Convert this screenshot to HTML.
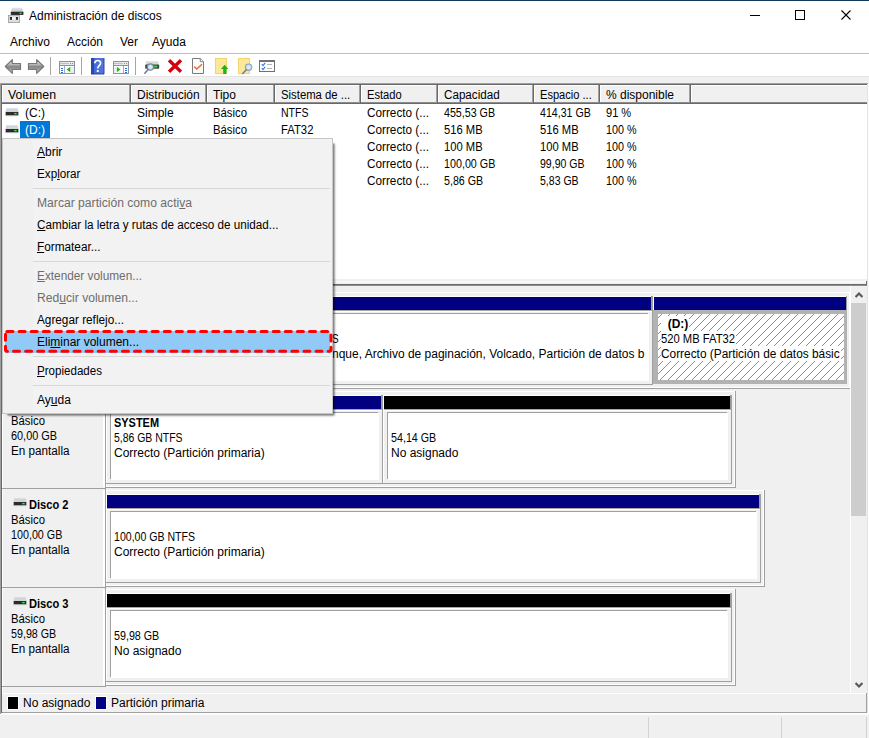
<!DOCTYPE html>
<html><head><meta charset="utf-8"><title>Administración de discos</title>
<style>
html,body{margin:0;padding:0}
body{width:869px;height:738px;overflow:hidden;position:relative;background:#f0f0f0;font-family:"Liberation Sans",sans-serif;font-size:12px;color:#000}
body>div,body>span,body>svg{position:absolute;display:block}
.t{white-space:nowrap;line-height:14px;height:14px}
u{text-decoration:underline;text-underline-offset:1px}
b{font-weight:bold}
</style></head>
<body>
<div style="left:0px;top:0px;width:869px;height:31px;background:#fff;"></div>
<div style="left:0px;top:0px;width:869px;height:1px;background:#113b5d;"></div>
<svg style="left:8px;top:7px" width="16" height="16" viewBox="0 0 16 16">
<defs><linearGradient id="gi" x1="0" y1="0" x2="0" y2="1"><stop offset="0" stop-color="#e2e4e7"/><stop offset="1" stop-color="#c3c7cc"/></linearGradient></defs>
<path d="M3.9 0.8 L14 0.8 L15.3 5 L2.8 5 Z" fill="url(#gi)"/>
<rect x="2.8" y="4.8" width="12.6" height="3.1" rx="0.5" fill="#2b2b2b"/>
<rect x="11.6" y="5.6" width="2" height="1.5" fill="#38e838"/>
<rect x="0.4" y="8.3" width="11.2" height="7.3" fill="#dcdee1" stroke="#9b9b9b" stroke-width="0.8"/>
<rect x="4" y="10.2" width="4" height="2.4" fill="#f6f6f6"/>
<rect x="1.9" y="10" width="2.1" height="2.8" fill="#2a2a2a"/>
<rect x="7.9" y="10" width="2.1" height="2.8" fill="#2a2a2a"/>
</svg>
<span class="t " style="left:29px;top:9px;">Administración de discos</span>
<svg style="left:740px;top:1px" width="129" height="29" viewBox="0 0 129 29" shape-rendering="crispEdges">
<rect x="10" y="14" width="10" height="1" fill="#000"/>
<rect x="55.5" y="9.5" width="9" height="9" fill="none" stroke="#000" stroke-width="1"/>
<path d="M101.5 9.5 L110.5 18.5 M110.5 9.5 L101.5 18.5" stroke="#000" stroke-width="1.1" fill="none" shape-rendering="auto"/>
</svg>
<div style="left:0px;top:31px;width:869px;height:22px;background:#fff;"></div>
<span class="t " style="left:10px;top:35px;">Archivo</span>
<span class="t " style="left:67px;top:35px;">Acción</span>
<span class="t " style="left:120px;top:35px;">Ver</span>
<span class="t " style="left:152px;top:35px;">Ayuda</span>
<div style="left:0px;top:53px;width:869px;height:1px;background:#bdbdbd;"></div>
<div style="left:0px;top:54px;width:869px;height:22px;background:#fff;"></div>
<div style="left:0px;top:76px;width:869px;height:1px;background:#e4e4e4;"></div>
<div style="left:50px;top:57px;width:1px;height:18px;background:#a6a6a6;"></div>
<div style="left:81px;top:57px;width:1px;height:18px;background:#a6a6a6;"></div>
<div style="left:135px;top:57px;width:1px;height:18px;background:#a6a6a6;"></div>
<svg style="left:0;top:54px" width="290" height="22" viewBox="0 0 290 22">
<defs>
<linearGradient id="ga" x1="0" y1="0" x2="0" y2="1"><stop offset="0" stop-color="#d6d6d6"/><stop offset="0.32" stop-color="#c2c2c2"/><stop offset="0.5" stop-color="#8a8a8a"/><stop offset="0.62" stop-color="#8f8f8f"/><stop offset="0.8" stop-color="#b4b4b4"/><stop offset="1" stop-color="#cccccc"/></linearGradient>
<linearGradient id="gh" x1="0" y1="0" x2="1" y2="0"><stop offset="0" stop-color="#2848b4"/><stop offset="0.2" stop-color="#2848b4"/><stop offset="0.22" stop-color="#4469d6"/><stop offset="1" stop-color="#5478de"/></linearGradient>
<radialGradient id="gl"><stop offset="0" stop-color="#e8f3fb"/><stop offset="1" stop-color="#b7d3ea"/></radialGradient>
</defs>
<!-- back / forward arrows -->
<path d="M5.3 12.5 L12.3 5.6 L12.3 9.5 L20.5 9.5 L20.5 15.5 L12.3 15.5 L12.3 19.4 Z" fill="url(#ga)" stroke="#787878" stroke-width="1.2" stroke-linejoin="round"/>
<path d="M43.7 12.5 L36.7 5.6 L36.7 9.5 L28.5 9.5 L28.5 15.5 L36.7 15.5 L36.7 19.4 Z" fill="url(#ga)" stroke="#787878" stroke-width="1.2" stroke-linejoin="round"/>
<!-- show/hide console tree -->
<g shape-rendering="crispEdges">
<rect x="59.5" y="7.5" width="15" height="12" fill="#fff" stroke="#8a92a6"/>
<rect x="60" y="8" width="14" height="3" fill="#e6e8ec"/>
<rect x="60" y="9" width="9" height="1" fill="#b9bfcc"/>
<rect x="70" y="9" width="1" height="1" fill="#8a92a6"/><rect x="72" y="9" width="1" height="1" fill="#8a92a6"/>
<rect x="60" y="11" width="14" height="1" fill="#8a92a6"/>
<rect x="64" y="12" width="1" height="7" fill="#a6adbd"/>
<rect x="61" y="14" width="2" height="1" fill="#2d6bd8"/><rect x="61" y="16" width="2" height="1" fill="#2d6bd8"/><rect x="61" y="18" width="2" height="1" fill="#2d6bd8"/>
<rect x="71" y="13" width="3" height="6" fill="#eeeeee"/>
</g>
<path d="M70.3 12.8 L70.3 18.2 L66.6 15.5 Z" fill="#25b425"/>
<!-- help -->
<rect x="91" y="4" width="13" height="16" fill="url(#gh)"/>
<path d="M91 20 L104 20 L104 4" fill="none" stroke="#1f3793" stroke-width="0.9"/>
<path d="M94.8 9.2 C94.8 5.6 100.6 5.6 100.6 9.1 C100.6 11.6 97.7 11.6 97.7 14.4" fill="none" stroke="#fff" stroke-width="1.7"/>
<rect x="96.8" y="16" width="1.9" height="2" fill="#fff"/>
<!-- action pane -->
<g shape-rendering="crispEdges">
<rect x="113.5" y="7.5" width="15" height="12" fill="#fff" stroke="#8a92a6"/>
<rect x="114" y="8" width="14" height="3" fill="#e6e8ec"/>
<rect x="114" y="9" width="9" height="1" fill="#b9bfcc"/>
<rect x="124" y="9" width="1" height="1" fill="#8a92a6"/><rect x="126" y="9" width="1" height="1" fill="#8a92a6"/>
<rect x="114" y="11" width="14" height="1" fill="#8a92a6"/>
<rect x="123" y="12" width="1" height="7" fill="#a6adbd"/>
<rect x="125" y="14" width="2" height="1" fill="#2d6bd8"/><rect x="125" y="16" width="2" height="1" fill="#2d6bd8"/><rect x="125" y="18" width="2" height="1" fill="#2d6bd8"/>
<rect x="114" y="13" width="2" height="6" fill="#eeeeee"/>
</g>
<path d="M116.8 12.8 L116.8 18.2 L120.5 15.5 Z" fill="#25b425"/>
<!-- drive + magnifier -->
<rect x="146" y="7.3" width="12.5" height="3.6" fill="#d6dade"/>
<rect x="145.2" y="10.4" width="14" height="4.4" rx="0.7" fill="#444"/>
<rect x="154.2" y="11.7" width="3" height="1.8" fill="#2fe62f"/>
<circle cx="150.4" cy="13" r="3.1" fill="url(#gl)" stroke="#73869a" stroke-width="1.1"/>
<path d="M148.1 15.6 L144.8 19.3" stroke="#6b7c8f" stroke-width="1.5" stroke-linecap="round"/>
<!-- red X -->
<path d="M169 6.2 L181 17.8 M181 6.2 L169 17.8" stroke="#d6000c" stroke-width="3.3" stroke-linecap="butt"/>
<!-- document with check -->
<path d="M192.5 4.5 L200.3 4.5 L203.5 7.7 L203.5 19.5 L192.5 19.5 Z" fill="#fbfbfb" stroke="#7b7b7b"/>
<path d="M200.3 4.5 L200.3 7.7 L203.5 7.7" fill="#fff" stroke="#7b7b7b" stroke-width="0.9"/>
<path d="M194.2 12.6 L196.8 15 L202 10.2" fill="none" stroke="#ee6a2c" stroke-width="1.5"/>
<!-- folder up -->
<rect x="215.4" y="4.4" width="11" height="15.2" fill="#fde798" stroke="#f1cf62" stroke-width="0.9"/>
<path d="M224.7 10.8 L228.4 14.9 L226.4 14.9 L226.4 20 L223.2 20 L223.2 14.9 L221 14.9 Z" fill="#19b619"/>
<!-- folder search -->
<rect x="238.4" y="4.4" width="11" height="15.2" fill="#fde798" stroke="#f1cf62" stroke-width="0.9"/>
<circle cx="248.6" cy="13.2" r="3.2" fill="url(#gl)" stroke="#8ea4ba" stroke-width="1.1"/>
<path d="M246.3 15.8 L242.7 19.5" stroke="#6d7f93" stroke-width="1.5" stroke-linecap="round"/>
<!-- checklist -->
<g shape-rendering="crispEdges">
<rect x="259.5" y="6.5" width="15" height="11" fill="#fff" stroke="#6f7174"/>
<rect x="260" y="7" width="14" height="1" fill="#6f7174"/>
<rect x="267" y="10" width="5" height="1" fill="#b5b5b5"/><rect x="267" y="14" width="5" height="1" fill="#b5b5b5"/>
</g>
<path d="M261.8 10.2 L263 11.6 L265.2 8.9" fill="none" stroke="#2b7be4" stroke-width="1.1"/>
<path d="M261.8 14.2 L263 15.6 L265.2 12.9" fill="none" stroke="#2b7be4" stroke-width="1.1"/>
</svg>
<div style="left:1px;top:83px;width:866px;height:196px;background:#fff;"></div>
<div style="left:0px;top:83px;width:868px;height:1px;background:#a0a0a0;"></div>
<div style="left:867px;top:84px;width:1px;height:202px;background:#e3e3e3;"></div>
<div style="left:868px;top:83px;width:1px;height:203px;background:#fff;"></div>
<div style="left:2px;top:84px;width:865px;height:20px;background:#f0f0f0;"></div>
<div style="left:2px;top:102px;width:865px;height:1px;background:#8c8c8c;"></div>
<div style="left:2px;top:103px;width:865px;height:1px;background:#696969;"></div>
<div style="left:1px;top:84px;width:866px;height:1px;background:#696969;"></div>
<div style="left:2px;top:85px;width:865px;height:1px;background:#fff;"></div>
<div style="left:2px;top:85px;width:1px;height:17px;background:#fff;"></div>
<div style="left:129px;top:85px;width:1px;height:18px;background:#a0a0a0;"></div>
<div style="left:130px;top:85px;width:1px;height:19px;background:#696969;"></div>
<span class="t " style="left:8px;top:88px;transform:scaleX(1.0278);transform-origin:0 0;">Volumen</span>
<div style="left:131px;top:85px;width:1px;height:17px;background:#fff;"></div>
<div style="left:205px;top:85px;width:1px;height:18px;background:#a0a0a0;"></div>
<div style="left:206px;top:85px;width:1px;height:19px;background:#696969;"></div>
<span class="t " style="left:137px;top:88px;">Distribución</span>
<div style="left:207px;top:85px;width:1px;height:17px;background:#fff;"></div>
<div style="left:273px;top:85px;width:1px;height:18px;background:#a0a0a0;"></div>
<div style="left:274px;top:85px;width:1px;height:19px;background:#696969;"></div>
<span class="t " style="left:213px;top:88px;">Tipo</span>
<div style="left:275px;top:85px;width:1px;height:17px;background:#fff;"></div>
<div style="left:359px;top:85px;width:1px;height:18px;background:#a0a0a0;"></div>
<div style="left:360px;top:85px;width:1px;height:19px;background:#696969;"></div>
<span class="t " style="left:281px;top:88px;transform:scaleX(0.9437);transform-origin:0 0;">Sistema de ...</span>
<div style="left:361px;top:85px;width:1px;height:17px;background:#fff;"></div>
<div style="left:436px;top:85px;width:1px;height:18px;background:#a0a0a0;"></div>
<div style="left:437px;top:85px;width:1px;height:19px;background:#696969;"></div>
<span class="t " style="left:367px;top:88px;transform:scaleX(0.9292);transform-origin:0 0;">Estado</span>
<div style="left:438px;top:85px;width:1px;height:17px;background:#fff;"></div>
<div style="left:532px;top:85px;width:1px;height:18px;background:#a0a0a0;"></div>
<div style="left:533px;top:85px;width:1px;height:19px;background:#696969;"></div>
<span class="t " style="left:444px;top:88px;transform:scaleX(0.9708);transform-origin:0 0;">Capacidad</span>
<div style="left:534px;top:85px;width:1px;height:17px;background:#fff;"></div>
<div style="left:598px;top:85px;width:1px;height:18px;background:#a0a0a0;"></div>
<div style="left:599px;top:85px;width:1px;height:19px;background:#696969;"></div>
<span class="t " style="left:540px;top:88px;transform:scaleX(0.9232);transform-origin:0 0;">Espacio ...</span>
<div style="left:600px;top:85px;width:1px;height:17px;background:#fff;"></div>
<div style="left:689px;top:85px;width:1px;height:18px;background:#a0a0a0;"></div>
<div style="left:690px;top:85px;width:1px;height:19px;background:#696969;"></div>
<span class="t " style="left:606px;top:88px;">% disponible</span>
<div style="left:691px;top:85px;width:1px;height:17px;background:#fff;"></div>
<span class="t " style="left:25px;top:106px;">(C:)</span>
<span class="t " style="left:137px;top:106px;">Simple</span>
<span class="t " style="left:213px;top:106px;transform:scaleX(0.9440);transform-origin:0 0;">Básico</span>
<span class="t " style="left:281px;top:106px;transform:scaleX(0.8778);transform-origin:0 0;">NTFS</span>
<span class="t " style="left:367px;top:106px;transform:scaleX(0.9790);transform-origin:0 0;">Correcto (...</span>
<span class="t " style="left:444px;top:106px;transform:scaleX(0.8894);transform-origin:0 0;">455,53 GB</span>
<span class="t " style="left:540px;top:106px;transform:scaleX(0.8841);transform-origin:0 0;">414,31 GB</span>
<span class="t " style="left:606px;top:106px;transform:scaleX(0.9216);transform-origin:0 0;">91 %</span>
<svg style="left:5px;top:108px" width="14" height="9" viewBox="0 0 14 9"><path d="M1.3 0.2 L12.7 0.2 L13.7 4.2 L0.3 4.2 Z" fill="#d2d6db"/><rect x="0.2" y="3.7" width="13.6" height="4.5" rx="0.7" fill="#c9cdd3"/><rect x="0.8" y="4" width="12.4" height="3.2" fill="#2c2c2c"/><rect x="9.2" y="4.9" width="2.5" height="1.4" fill="#36ea36"/></svg>
<div style="left:20px;top:121px;width:30px;height:17px;background:#0078d7;"></div>
<span class="t " style="left:25px;top:123px;color:#fff;">(D:)</span>
<span class="t " style="left:137px;top:123px;">Simple</span>
<span class="t " style="left:213px;top:123px;transform:scaleX(0.9440);transform-origin:0 0;">Básico</span>
<span class="t " style="left:281px;top:123px;transform:scaleX(0.9404);transform-origin:0 0;">FAT32</span>
<span class="t " style="left:367px;top:123px;transform:scaleX(0.9790);transform-origin:0 0;">Correcto (...</span>
<span class="t " style="left:444px;top:123px;transform:scaleX(0.9336);transform-origin:0 0;">516 MB</span>
<span class="t " style="left:540px;top:123px;transform:scaleX(0.9336);transform-origin:0 0;">516 MB</span>
<span class="t " style="left:606px;top:123px;transform:scaleX(0.8966);transform-origin:0 0;">100 %</span>
<svg style="left:5px;top:125px" width="14" height="9" viewBox="0 0 14 9"><path d="M1.3 0.2 L12.7 0.2 L13.7 4.2 L0.3 4.2 Z" fill="#d2d6db"/><rect x="0.2" y="3.7" width="13.6" height="4.5" rx="0.7" fill="#c9cdd3"/><rect x="0.8" y="4" width="12.4" height="3.2" fill="#2c2c2c"/><rect x="9.2" y="4.9" width="2.5" height="1.4" fill="#36ea36"/></svg>
<span class="t " style="left:367px;top:140px;transform:scaleX(0.9790);transform-origin:0 0;">Correcto (...</span>
<span class="t " style="left:444px;top:140px;transform:scaleX(0.9336);transform-origin:0 0;">100 MB</span>
<span class="t " style="left:540px;top:140px;transform:scaleX(0.9336);transform-origin:0 0;">100 MB</span>
<span class="t " style="left:606px;top:140px;transform:scaleX(0.8966);transform-origin:0 0;">100 %</span>
<span class="t " style="left:367px;top:157px;transform:scaleX(0.9790);transform-origin:0 0;">Correcto (...</span>
<span class="t " style="left:444px;top:157px;transform:scaleX(0.8946);transform-origin:0 0;">100,00 GB</span>
<span class="t " style="left:540px;top:157px;transform:scaleX(0.8782);transform-origin:0 0;">99,90 GB</span>
<span class="t " style="left:606px;top:157px;transform:scaleX(0.8966);transform-origin:0 0;">100 %</span>
<span class="t " style="left:367px;top:174px;transform:scaleX(0.9790);transform-origin:0 0;">Correcto (...</span>
<span class="t " style="left:444px;top:174px;transform:scaleX(0.8909);transform-origin:0 0;">5,86 GB</span>
<span class="t " style="left:540px;top:174px;transform:scaleX(0.8773);transform-origin:0 0;">5,83 GB</span>
<span class="t " style="left:606px;top:174px;transform:scaleX(0.8966);transform-origin:0 0;">100 %</span>
<div style="left:2px;top:279px;width:865px;height:2px;background:#f0f0f0;"></div>
<div style="left:2px;top:281px;width:865px;height:1px;background:#fbfbfb;"></div>
<div style="left:2px;top:282px;width:865px;height:2px;background:#f3f3f3;"></div>
<div style="left:1px;top:284px;width:866px;height:1px;background:#6a6a6a;"></div>
<div style="left:866px;top:281px;width:1px;height:4px;background:#6a6a6a;"></div>
<div style="left:1px;top:285px;width:866px;height:1px;background:#8c8c8c;"></div>
<div style="left:2px;top:286px;width:1px;height:407px;background:#fff;"></div>
<div style="left:2px;top:290px;width:104px;height:1px;background:#a0a0a0;"></div>
<div style="left:105px;top:291px;width:1px;height:98px;background:#a0a0a0;"></div>
<div style="left:103px;top:292px;width:1px;height:96px;background:#fff;"></div>
<div style="left:104px;top:292px;width:1px;height:96px;background:#fff;"></div>
<div style="left:106px;top:292px;width:1px;height:96px;background:#fff;"></div>
<svg style="left:13px;top:300px" width="14" height="9" viewBox="0 0 14 9"><path d="M1.3 0.2 L12.7 0.2 L13.7 4.2 L0.3 4.2 Z" fill="#d2d6db"/><rect x="0.2" y="3.7" width="13.6" height="4.5" rx="0.7" fill="#c9cdd3"/><rect x="0.8" y="4" width="12.4" height="3.2" fill="#2c2c2c"/><rect x="9.2" y="4.9" width="2.5" height="1.4" fill="#36ea36"/></svg>
<span class="t " style="left:29px;top:300px;transform:scaleX(0.9257);transform-origin:0 0;"><b>Disco 0</b></span>
<span class="t " style="left:11px;top:315px;transform:scaleX(0.9440);transform-origin:0 0;">Básico</span>
<span class="t " style="left:11px;top:330px;"></span>
<span class="t " style="left:11px;top:345px;transform:scaleX(0.9745);transform-origin:0 0;">En pantalla</span>
<div style="left:106px;top:292px;width:744px;height:1px;background:#fff;"></div>
<div style="left:850px;top:292px;width:1px;height:97px;background:#a0a0a0;"></div>
<div style="left:105px;top:388px;width:746px;height:1px;background:#a0a0a0;"></div>
<div style="left:106px;top:387px;width:744px;height:1px;background:#fff;"></div>
<div style="left:849px;top:293px;width:1px;height:95px;background:#fff;"></div>
<div style="left:106px;top:384px;width:547px;height:1px;background:#a0a0a0;"></div>
<div style="left:107px;top:296px;width:544px;height:1px;background:#fff;"></div>
<div style="left:107px;top:297px;width:544px;height:13px;background:#000080;"></div>
<div style="left:651px;top:296px;width:1px;height:15px;background:#9c9c9c;"></div>
<div style="left:107px;top:310px;width:545px;height:1px;background:#aaa89e;"></div>
<div style="left:107px;top:311px;width:545px;height:1px;background:#fff;"></div>
<div style="left:652px;top:296px;width:1px;height:89px;background:#a0a0a0;"></div>
<div style="left:653px;top:296px;width:1px;height:88px;background:#fff;"></div>
<div style="left:111px;top:314px;width:538px;height:67px;background:#fff;"></div>
<div style="left:110px;top:313px;width:538px;height:1px;background:#a0a0a0;"></div>
<div style="left:110px;top:313px;width:1px;height:67px;background:#a0a0a0;"></div>
<span class="t" style="left:114px;top:317px;width:534px;overflow:hidden;"><b>(C:)</b></span>
<span class="t" style="left:332px;top:332px;width:316px;overflow:hidden;transform:scaleX(0.8250);transform-origin:0 0;">S</span>
<span class="t" style="left:332.3px;top:347px;width:315.7px;overflow:hidden;transform:scaleX(0.9984);transform-origin:0 0;">nque, Archivo de paginación, Volcado, Partición de datos b</span>
<div style="left:654px;top:296px;width:192px;height:1px;background:#fff;"></div>
<div style="left:654px;top:297px;width:192px;height:13px;background:#000080;"></div>
<div style="left:846px;top:296px;width:1px;height:15px;background:#9c9c9c;"></div>
<div style="left:654px;top:310px;width:193px;height:1px;background:#aaa89e;"></div>
<div style="left:654px;top:311px;width:193px;height:1px;background:#fff;"></div>
<div style="left:653px;top:310px;width:194px;height:74px;background:#b2b2b2;"></div>
<svg style="left:658px;top:314px" width="186" height="66"><defs><pattern id="hp" width="8" height="8" patternUnits="userSpaceOnUse" patternTransform="translate(4,0)"><rect width="8" height="8" fill="#fff"/><path d="M-1 9 L9 -1 M-1 1 L1 -1 M7 9 L9 7" stroke="#8c8c8c" stroke-width="1"/></pattern></defs><rect width="100%" height="100%" fill="url(#hp)"/></svg>
<div style="left:661px;top:316px;width:28px;height:15px;background:#fff;"></div>
<span class="t" style="left:661px;top:317px;width:182px;overflow:hidden;"><b>&nbsp;&nbsp;(D:)</b></span>
<div style="left:661px;top:331px;width:75px;height:15px;background:#fff;"></div>
<span class="t" style="left:661px;top:332px;width:182px;overflow:hidden;transform:scaleX(0.9352);transform-origin:0 0;">520 MB FAT32</span>
<div style="left:661px;top:346px;width:180px;height:15px;background:#fff;"></div>
<span class="t" style="left:661px;top:347px;width:182px;overflow:hidden;transform:scaleX(0.9883);transform-origin:0 0;">Correcto (Partición de datos básic</span>
<div style="left:2px;top:389px;width:104px;height:1px;background:#a0a0a0;"></div>
<div style="left:105px;top:390px;width:1px;height:98px;background:#a0a0a0;"></div>
<div style="left:103px;top:391px;width:1px;height:96px;background:#fff;"></div>
<div style="left:104px;top:391px;width:1px;height:96px;background:#fff;"></div>
<div style="left:106px;top:391px;width:1px;height:96px;background:#fff;"></div>
<svg style="left:13px;top:399px" width="14" height="9" viewBox="0 0 14 9"><path d="M1.3 0.2 L12.7 0.2 L13.7 4.2 L0.3 4.2 Z" fill="#d2d6db"/><rect x="0.2" y="3.7" width="13.6" height="4.5" rx="0.7" fill="#c9cdd3"/><rect x="0.8" y="4" width="12.4" height="3.2" fill="#2c2c2c"/><rect x="9.2" y="4.9" width="2.5" height="1.4" fill="#36ea36"/></svg>
<span class="t " style="left:29px;top:399px;transform:scaleX(0.9257);transform-origin:0 0;"><b>Disco 1</b></span>
<span class="t " style="left:11px;top:414px;transform:scaleX(0.9440);transform-origin:0 0;">Básico</span>
<span class="t " style="left:11px;top:429px;transform:scaleX(0.9078);transform-origin:0 0;">60,00 GB</span>
<span class="t " style="left:11px;top:444px;transform:scaleX(0.9745);transform-origin:0 0;">En pantalla</span>
<div style="left:106px;top:391px;width:629px;height:1px;background:#fff;"></div>
<div style="left:735px;top:391px;width:1px;height:97px;background:#a0a0a0;"></div>
<div style="left:105px;top:487px;width:631px;height:1px;background:#a0a0a0;"></div>
<div style="left:106px;top:486px;width:629px;height:1px;background:#fff;"></div>
<div style="left:734px;top:392px;width:1px;height:95px;background:#fff;"></div>
<div style="left:106px;top:483px;width:626px;height:1px;background:#a0a0a0;"></div>
<div style="left:107px;top:395px;width:274px;height:1px;background:#fff;"></div>
<div style="left:107px;top:396px;width:274px;height:13px;background:#000080;"></div>
<div style="left:381px;top:395px;width:1px;height:15px;background:#9c9c9c;"></div>
<div style="left:107px;top:409px;width:275px;height:1px;background:#aaa89e;"></div>
<div style="left:107px;top:410px;width:275px;height:1px;background:#fff;"></div>
<div style="left:382px;top:395px;width:1px;height:89px;background:#a0a0a0;"></div>
<div style="left:383px;top:395px;width:1px;height:88px;background:#fff;"></div>
<div style="left:111px;top:413px;width:268px;height:67px;background:#fff;"></div>
<div style="left:110px;top:412px;width:268px;height:1px;background:#a0a0a0;"></div>
<div style="left:110px;top:412px;width:1px;height:67px;background:#a0a0a0;"></div>
<span class="t" style="left:114px;top:416px;width:264px;overflow:hidden;transform:scaleX(0.9123);transform-origin:0 0;"><b>SYSTEM</b></span>
<span class="t" style="left:114px;top:431px;width:264px;overflow:hidden;transform:scaleX(0.8709);transform-origin:0 0;">5,86 GB NTFS</span>
<span class="t" style="left:114px;top:446px;width:264px;overflow:hidden;">Correcto (Partición primaria)</span>
<div style="left:384px;top:395px;width:346px;height:1px;background:#fff;"></div>
<div style="left:384px;top:396px;width:346px;height:13px;background:#000;"></div>
<div style="left:730px;top:395px;width:1px;height:15px;background:#9c9c9c;"></div>
<div style="left:384px;top:409px;width:347px;height:1px;background:#aaa89e;"></div>
<div style="left:384px;top:410px;width:347px;height:1px;background:#fff;"></div>
<div style="left:731px;top:395px;width:1px;height:89px;background:#a0a0a0;"></div>
<div style="left:388px;top:413px;width:340px;height:67px;background:#fff;"></div>
<div style="left:387px;top:412px;width:340px;height:1px;background:#a0a0a0;"></div>
<div style="left:387px;top:412px;width:1px;height:67px;background:#a0a0a0;"></div>
<span class="t" style="left:391px;top:431px;width:336px;overflow:hidden;transform:scaleX(0.8920);transform-origin:0 0;">54,14 GB</span>
<span class="t" style="left:391px;top:446px;width:336px;overflow:hidden;">No asignado</span>
<div style="left:2px;top:488px;width:104px;height:1px;background:#a0a0a0;"></div>
<div style="left:105px;top:489px;width:1px;height:98px;background:#a0a0a0;"></div>
<div style="left:103px;top:490px;width:1px;height:96px;background:#fff;"></div>
<div style="left:104px;top:490px;width:1px;height:96px;background:#fff;"></div>
<div style="left:106px;top:490px;width:1px;height:96px;background:#fff;"></div>
<svg style="left:13px;top:498px" width="14" height="9" viewBox="0 0 14 9"><path d="M1.3 0.2 L12.7 0.2 L13.7 4.2 L0.3 4.2 Z" fill="#d2d6db"/><rect x="0.2" y="3.7" width="13.6" height="4.5" rx="0.7" fill="#c9cdd3"/><rect x="0.8" y="4" width="12.4" height="3.2" fill="#2c2c2c"/><rect x="9.2" y="4.9" width="2.5" height="1.4" fill="#36ea36"/></svg>
<span class="t " style="left:29px;top:498px;transform:scaleX(0.9257);transform-origin:0 0;"><b>Disco 2</b></span>
<span class="t " style="left:11px;top:513px;transform:scaleX(0.9440);transform-origin:0 0;">Básico</span>
<span class="t " style="left:11px;top:528px;transform:scaleX(0.8946);transform-origin:0 0;">100,00 GB</span>
<span class="t " style="left:11px;top:543px;transform:scaleX(0.9745);transform-origin:0 0;">En pantalla</span>
<div style="left:106px;top:490px;width:658px;height:1px;background:#fff;"></div>
<div style="left:764px;top:490px;width:1px;height:97px;background:#a0a0a0;"></div>
<div style="left:105px;top:586px;width:660px;height:1px;background:#a0a0a0;"></div>
<div style="left:106px;top:585px;width:658px;height:1px;background:#fff;"></div>
<div style="left:763px;top:491px;width:1px;height:95px;background:#fff;"></div>
<div style="left:106px;top:582px;width:655px;height:1px;background:#a0a0a0;"></div>
<div style="left:107px;top:494px;width:652px;height:1px;background:#fff;"></div>
<div style="left:107px;top:495px;width:652px;height:13px;background:#000080;"></div>
<div style="left:759px;top:494px;width:1px;height:15px;background:#9c9c9c;"></div>
<div style="left:107px;top:508px;width:653px;height:1px;background:#aaa89e;"></div>
<div style="left:107px;top:509px;width:653px;height:1px;background:#fff;"></div>
<div style="left:760px;top:494px;width:1px;height:89px;background:#a0a0a0;"></div>
<div style="left:111px;top:512px;width:646px;height:67px;background:#fff;"></div>
<div style="left:110px;top:511px;width:646px;height:1px;background:#a0a0a0;"></div>
<div style="left:110px;top:511px;width:1px;height:67px;background:#a0a0a0;"></div>
<span class="t" style="left:114px;top:530px;width:642px;overflow:hidden;transform:scaleX(0.8804);transform-origin:0 0;">100,00 GB NTFS</span>
<span class="t" style="left:114px;top:545px;width:642px;overflow:hidden;">Correcto (Partición primaria)</span>
<div style="left:2px;top:587px;width:104px;height:1px;background:#a0a0a0;"></div>
<div style="left:105px;top:588px;width:1px;height:98px;background:#a0a0a0;"></div>
<div style="left:103px;top:589px;width:1px;height:96px;background:#fff;"></div>
<div style="left:104px;top:589px;width:1px;height:96px;background:#fff;"></div>
<div style="left:106px;top:589px;width:1px;height:96px;background:#fff;"></div>
<svg style="left:13px;top:597px" width="14" height="9" viewBox="0 0 14 9"><path d="M1.3 0.2 L12.7 0.2 L13.7 4.2 L0.3 4.2 Z" fill="#d2d6db"/><rect x="0.2" y="3.7" width="13.6" height="4.5" rx="0.7" fill="#c9cdd3"/><rect x="0.8" y="4" width="12.4" height="3.2" fill="#2c2c2c"/><rect x="9.2" y="4.9" width="2.5" height="1.4" fill="#36ea36"/></svg>
<span class="t " style="left:29px;top:597px;transform:scaleX(0.9257);transform-origin:0 0;"><b>Disco 3</b></span>
<span class="t " style="left:11px;top:612px;transform:scaleX(0.9440);transform-origin:0 0;">Básico</span>
<span class="t " style="left:11px;top:627px;transform:scaleX(0.8920);transform-origin:0 0;">59,98 GB</span>
<span class="t " style="left:11px;top:642px;transform:scaleX(0.9745);transform-origin:0 0;">En pantalla</span>
<div style="left:106px;top:589px;width:629px;height:1px;background:#fff;"></div>
<div style="left:735px;top:589px;width:1px;height:97px;background:#a0a0a0;"></div>
<div style="left:105px;top:685px;width:631px;height:1px;background:#a0a0a0;"></div>
<div style="left:106px;top:684px;width:629px;height:1px;background:#fff;"></div>
<div style="left:734px;top:590px;width:1px;height:95px;background:#fff;"></div>
<div style="left:106px;top:681px;width:626px;height:1px;background:#a0a0a0;"></div>
<div style="left:107px;top:593px;width:623px;height:1px;background:#fff;"></div>
<div style="left:107px;top:594px;width:623px;height:13px;background:#000;"></div>
<div style="left:730px;top:593px;width:1px;height:15px;background:#9c9c9c;"></div>
<div style="left:107px;top:607px;width:624px;height:1px;background:#aaa89e;"></div>
<div style="left:107px;top:608px;width:624px;height:1px;background:#fff;"></div>
<div style="left:731px;top:593px;width:1px;height:89px;background:#a0a0a0;"></div>
<div style="left:111px;top:611px;width:617px;height:67px;background:#fff;"></div>
<div style="left:110px;top:610px;width:617px;height:1px;background:#a0a0a0;"></div>
<div style="left:110px;top:610px;width:1px;height:67px;background:#a0a0a0;"></div>
<span class="t" style="left:114px;top:629px;width:613px;overflow:hidden;transform:scaleX(0.8920);transform-origin:0 0;">59,98 GB</span>
<span class="t" style="left:114px;top:644px;width:613px;overflow:hidden;">No asignado</span>
<div style="left:850px;top:286px;width:1px;height:407px;background:#fff;"></div>
<div style="left:851px;top:286px;width:16px;height:407px;background:#f0f0f0;"></div>
<div style="left:851px;top:303px;width:15px;height:213px;background:#cdcdcd;"></div>
<div style="left:867px;top:286px;width:1px;height:427px;background:#e3e3e3;"></div>
<div style="left:868px;top:286px;width:1px;height:427px;background:#fff;"></div>
<svg style="left:855px;top:292px" width="8" height="6" viewBox="0 0 8 6"><path d="M0.6 5 L4 1.6 L7.4 5" fill="none" stroke="#5a5a5a" stroke-width="2.1"/></svg>
<svg style="left:855px;top:682px" width="8" height="6" viewBox="0 0 8 6"><path d="M0.6 1 L4 4.4 L7.4 1" fill="none" stroke="#5a5a5a" stroke-width="2.1"/></svg>
<div style="left:2px;top:686px;width:104px;height:1px;background:#a0a0a0;"></div>
<div style="left:2px;top:693px;width:865px;height:1px;background:#fff;"></div>
<div style="left:2px;top:694px;width:865px;height:19px;background:#f0f0f0;"></div>
<div style="left:2px;top:712px;width:865px;height:1px;background:#a0a0a0;"></div>
<div style="left:866px;top:693px;width:1px;height:20px;background:#a0a0a0;"></div>
<div style="left:0px;top:713px;width:869px;height:1px;background:#fff;"></div>
<div style="left:0px;top:714px;width:869px;height:1px;background:#fafafa;"></div>
<div style="left:0px;top:84px;width:1px;height:630px;background:#a0a0a0;"></div>
<div style="left:1px;top:85px;width:1px;height:628px;background:#696969;"></div>
<div style="left:7px;top:696px;width:12px;height:14px;background:#fff;"></div>
<div style="left:8px;top:697px;width:10px;height:12px;background:#000;"></div>
<span class="t " style="left:23px;top:696px;">No asignado</span>
<div style="left:95px;top:696px;width:12px;height:14px;background:#fff;"></div>
<div style="left:96px;top:697px;width:10px;height:12px;background:#000080;"></div>
<span class="t " style="left:111px;top:696px;">Partición primaria</span>
<div style="left:648px;top:717px;width:1px;height:21px;background:#d2d2d2;"></div>
<div style="left:781px;top:717px;width:1px;height:21px;background:#d2d2d2;"></div>
<div style="left:866px;top:717px;width:1px;height:21px;background:#d2d2d2;"></div>
<div style="left:8px;top:144px;width:326px;height:271px;background:rgba(0,0,0,0.45);box-shadow:0 0 2px 1px rgba(0,0,0,0.4);border-radius:1px;"></div>
<div style="left:2px;top:138px;width:329px;height:274px;background:#f2f2f2;border:1px solid #c6c6c6;"></div>
<div style="left:3px;top:139px;width:30px;height:274px;background:#f0f0f0;"></div>
<div style="left:5px;top:331px;width:325px;height:22px;background:#91c9f7;"></div>
<span class="t " style="left:37px;top:145px;"><u>A</u>brir</span>
<span class="t " style="left:37px;top:167px;transform:scaleX(0.9734);transform-origin:0 0;">Exp<u>l</u>orar</span>
<span class="t " style="left:37px;top:196px;transform:scaleX(1.0106);transform-origin:0 0;color:#6d6d6d;">Marcar partición como acti<u>v</u>a</span>
<span class="t " style="left:37px;top:218px;transform:scaleX(0.9735);transform-origin:0 0;"><u>C</u>ambiar la letra y rutas de acceso de unidad...</span>
<span class="t " style="left:37px;top:240px;transform:scaleX(0.9819);transform-origin:0 0;"><u>F</u>ormatear...</span>
<span class="t " style="left:37px;top:269px;transform:scaleX(0.9842);transform-origin:0 0;color:#6d6d6d;"><u>E</u>xtender volumen...</span>
<span class="t " style="left:37px;top:291px;transform:scaleX(1.0097);transform-origin:0 0;color:#6d6d6d;">Red<u>u</u>cir volumen...</span>
<span class="t " style="left:37px;top:313px;transform:scaleX(0.9810);transform-origin:0 0;">Agregar refle<u>j</u>o...</span>
<span class="t " style="left:37px;top:335px;">Eli<u>m</u>inar volumen...</span>
<span class="t " style="left:37px;top:364px;transform:scaleX(0.9647);transform-origin:0 0;"><u>P</u>ropiedades</span>
<span class="t " style="left:37px;top:393px;">Ay<u>u</u>da</span>
<div style="left:33px;top:188px;width:297px;height:1px;background:#d7d7d7;"></div>
<div style="left:33px;top:261px;width:297px;height:1px;background:#d7d7d7;"></div>
<div style="left:33px;top:356px;width:297px;height:1px;background:#d7d7d7;"></div>
<div style="left:33px;top:385px;width:297px;height:1px;background:#d7d7d7;"></div>
<svg style="left:0;top:325px" width="340" height="34"><rect x="5.5" y="6.5" width="325.5" height="19.7" rx="1.5" fill="none" stroke="#ff0000" stroke-width="3" stroke-dasharray="6 6.1" stroke-linecap="round"/></svg>
</body></html>
